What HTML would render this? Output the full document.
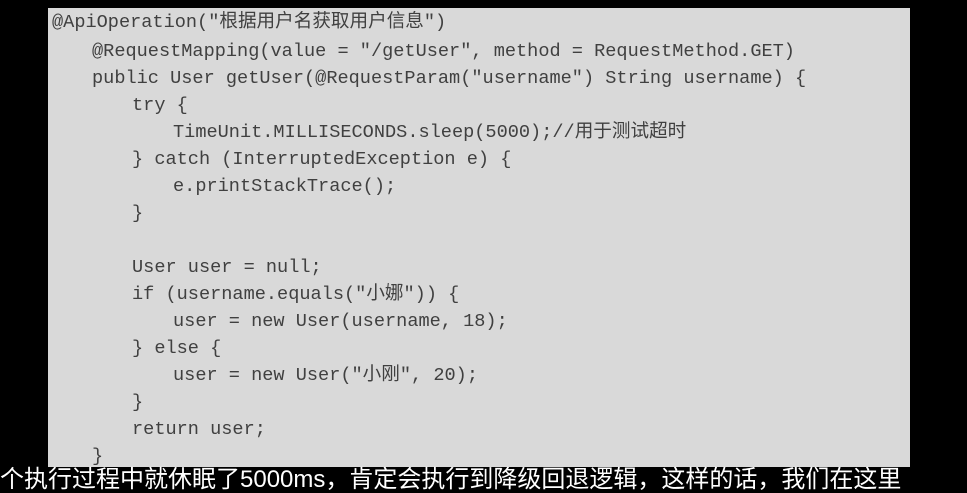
<!DOCTYPE html>
<html><head><meta charset="utf-8"><style>
html,body{margin:0;padding:0;background:#000;width:967px;height:479px;overflow:hidden}
.p{position:absolute;left:48px;top:8px;width:862px;height:459px;background:#d9d9d9}
.l{position:absolute;white-space:pre;font-family:"Liberation Mono","Noto Sans CJK SC",monospace;font-size:18.6px;color:#404040;line-height:20px}
.b{position:absolute;left:0;top:467px;white-space:nowrap;font-family:"Liberation Sans","Noto Sans CJK SC",sans-serif;font-size:24px;color:#fff;line-height:26px}
</style></head><body>
<div class="p"></div>
<div class="l" style="left:52px;top:13px">@ApiOperation("根据用户名获取用户信息")</div>
<div class="l" style="left:92px;top:42px">@RequestMapping(value = "/getUser", method = RequestMethod.GET)</div>
<div class="l" style="left:92px;top:69px">public User getUser(@RequestParam("username") String username) {</div>
<div class="l" style="left:132px;top:96px">try {</div>
<div class="l" style="left:173px;top:123px">TimeUnit.MILLISECONDS.sleep(5000);//用于测试超时</div>
<div class="l" style="left:132px;top:150px">} catch (InterruptedException e) {</div>
<div class="l" style="left:173px;top:177px">e.printStackTrace();</div>
<div class="l" style="left:132px;top:204px">}</div>
<div class="l" style="left:132px;top:258px">User user = null;</div>
<div class="l" style="left:132px;top:285px">if (username.equals("小娜")) {</div>
<div class="l" style="left:173px;top:312px">user = new User(username, 18);</div>
<div class="l" style="left:132px;top:339px">} else {</div>
<div class="l" style="left:173px;top:366px">user = new User("小刚", 20);</div>
<div class="l" style="left:132px;top:393px">}</div>
<div class="l" style="left:132px;top:420px">return user;</div>
<div class="l" style="left:92px;top:447px">}</div>
<div class="b">个执行过程中就休眠了5000ms，肯定会执行到降级回退逻辑，这样的话，我们在这里</div>
</body></html>
